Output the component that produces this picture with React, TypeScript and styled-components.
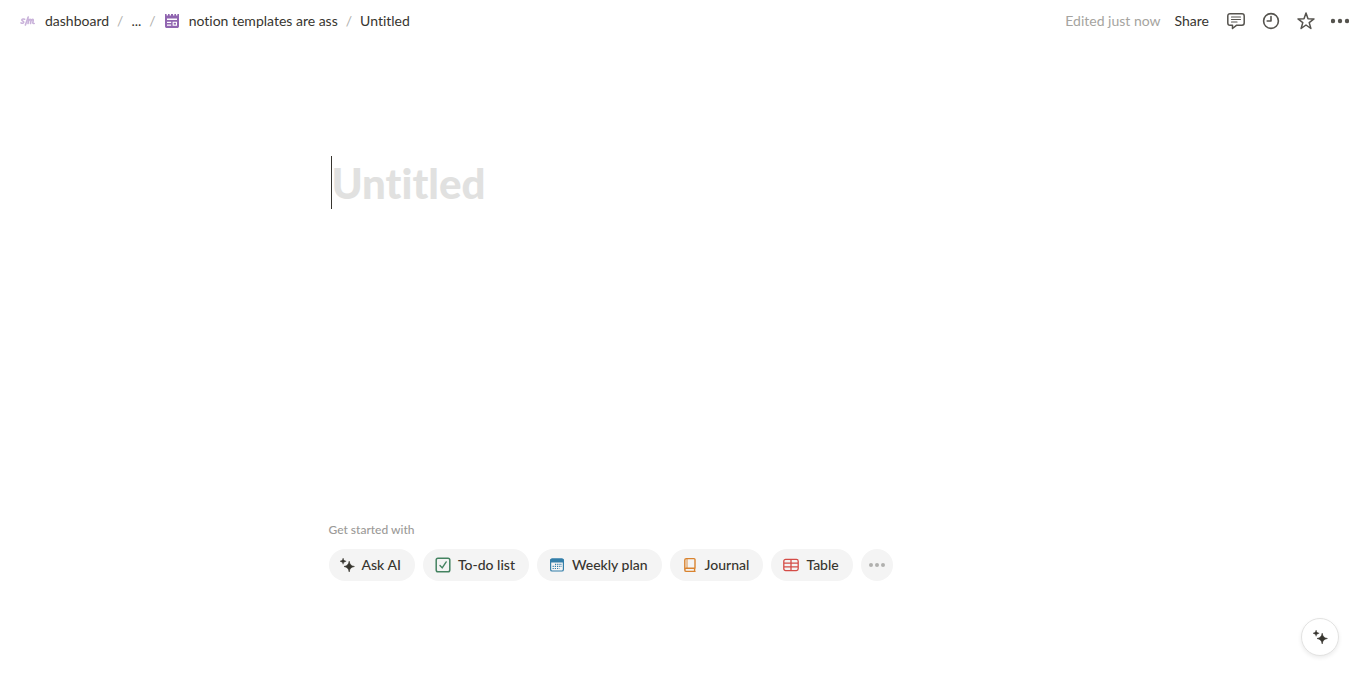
import React from 'react';
import styled, { createGlobalStyle } from 'styled-components';

const GlobalStyle = createGlobalStyle`
  * { box-sizing: border-box; }
  body {
    margin: 0;
    background: #fff;
    color: #37352f;
    font-family: Lato, "Open Sans", sans-serif;
    font-size: 14px;
    font-variant-ligatures: none;
  }
  button, input { font: inherit; font-variant-ligatures: none; color: inherit; }
  button { border: 0; background: none; padding: 0; cursor: pointer; }
  svg { display: block; flex: none; }
`;

const Page = styled.div`
  min-height: 100vh;
  display: flex;
  flex-direction: column;
`;

const TopBar = styled.header`
  display: flex;
  align-items: center;
  justify-content: space-between;
  height: 42px;
  padding: 0 16px 0 20px;
`;

const Breadcrumbs = styled.nav`
  display: flex;
  align-items: center;
  gap: 8px;
  line-height: 20px;
`;

const Crumb = styled.a`
  display: flex;
  align-items: center;
  gap: 9px;
  color: #37352f;
  text-decoration: none;
  white-space: nowrap;
`;

const Slash = styled.span`
  color: #b0afac;
`;

const Actions = styled.div`
  display: flex;
  align-items: center;
  gap: 14px;
  line-height: 20px;
`;

const Edited = styled.span`
  color: #a5a4a0;
`;

const ShareButton = styled.button`
  color: #37352f;
`;

const IconGroup = styled.div`
  display: flex;
  align-items: center;
  gap: 15px;
  padding-left: 3px;
`;

const IconButton = styled.button`
  display: flex;
  color: #55534e;
`;

const Content = styled.main`
  width: 100%;
  max-width: 708px;
  margin: 0 auto;
  padding-top: 114px;
  flex: 1;
`;

const TitleInput = styled.input`
  display: block;
  width: calc(100% - 2px);
  height: 53px;
  margin-left: 2px;
  padding: 0;
  border: 0;
  border-left: 1px solid #37352f;
  outline: 0;
  background: none;
  font-size: 42px;
  font-weight: 900;
  &::placeholder { color: #e1e1e0; opacity: 1; }
`;

const Starter = styled.section`
  margin-top: 313px;
`;

const StarterLabel = styled.h2`
  margin: 0 0 11px;
  color: #9b9a97;
  font-size: 12px;
  line-height: 16px;
  font-weight: 500;
`;

const PillRow = styled.div`
  display: flex;
  flex-wrap: wrap;
  gap: 8px;
`;

const Pill = styled.button<{ $inset?: number }>`
  display: flex;
  align-items: center;
  gap: 7px;
  height: 32px;
  padding: 0 14px 0 ${({ $inset = 12 }) => $inset}px;
  border-radius: 16px;
  background: #f4f4f4;
  font-weight: 500;
  line-height: 16px;
  white-space: nowrap;
`;

const MorePill = styled(Pill)`
  width: 32px;
  padding: 0;
  justify-content: center;
  color: #b0b0ae;
`;

const AiButton = styled.button`
  position: fixed;
  right: 26px;
  bottom: 20px;
  display: flex;
  align-items: center;
  justify-content: center;
  width: 38px;
  height: 38px;
  border: 1px solid #e2e2e1;
  border-radius: 50%;
  background: #fff;
  box-shadow: 0 2px 4px rgba(15, 15, 15, 0.08);
`;

const LogoMark = () => (
  <svg width="16" height="16" viewBox="0 0 16 16" fill="none" stroke="#c9b2da" strokeWidth="1.6" strokeLinecap="round" strokeLinejoin="round">
    <path d="M4.6 6.2C2.8 5.5 1.4 6.4 2 7.4c.5.9 1.9.7 1.7 1.9-.2 1.2-1.7 1.2-2.7.6M8.2 4 5.4 12M8 10.5l1-4.2M8.8 7.8c1-1.8 2.5-1.8 2.2-.2l-.5 2.9M11.2 7.6c1-1.7 2.3-1.6 2 0l-.4 2.1c-.1.6.5.8 1.4.8" />
  </svg>
);

const NewsIcon = () => (
  <svg width="16" height="16" viewBox="0 0 16 16">
    <path fill="#9065b0" fillRule="evenodd" d="M1 1h1.600v1.400h1.400V1h1.600v1.400H7V1h2v1.400h1.400V1H12v1.400h1.400V1H15v12.200c0 1-.8 1.800-1.800 1.800H2.800C1.800 15 1 14.200 1 13.200ZM3 5.600v1.400h10V5.600ZM3 8.700v1.200h4.200V8.700ZM3 11.500v1.200h4.200v-1.200ZM8.600 8.700v4H13v-4Z" />
    <path fill="#9065b0" d="M9.700 9.800h2.200v1.800H9.700z" />
  </svg>
);

const CommentIcon = () => (
  <svg width="20" height="20" viewBox="0 0 20 20" fill="none" stroke="currentColor" strokeWidth="1.5" strokeLinejoin="round" strokeLinecap="round">
    <path d="M4 2.700h12A2.200 2.200 0 0 1 18.200 4.900v7.200a2.200 2.200 0 0 1-2.200 2.200h-5.600L6.500 17.500v-3.200H4a2.200 2.200 0 0 1-2.200-2.200V4.900A2.200 2.200 0 0 1 4 2.700Z" />
    <path strokeWidth="1.200" d="M5.500 6h9M5.500 8.500h9M5.500 11h5.500" />
  </svg>
);

const ClockIcon = () => (
  <svg width="20" height="20" viewBox="0 0 20 20" fill="none" stroke="currentColor" strokeWidth="1.600" strokeLinecap="round" strokeLinejoin="round">
    <circle cx="10" cy="10" r="7.400" />
    <path d="M10 5.500V10H6.200" />
  </svg>
);

const StarIcon = () => (
  <svg width="20" height="20" viewBox="0 0 20 20" fill="none" stroke="currentColor" strokeWidth="1.500" strokeLinejoin="round">
    <path d="M10 2l2 5.700 6 .2-4.800 3.700 1.700 5.900-4.900-3.500-4.900 3.500 1.700-5.900L2 7.900l6-.2Z" />
  </svg>
);

const DotsIcon = ({ size, r, gap }: { size: number; r: number; gap: number }) => (
  <svg width={size} height="20" viewBox={`0 0 ${size} 20`} fill="currentColor">
    <circle cx={size / 2 - gap} cy="10" r={r} />
    <circle cx={size / 2} cy="10" r={r} />
    <circle cx={size / 2 + gap} cy="10" r={r} />
  </svg>
);

const SparkleIcon = () => (
  <svg width="16" height="16" viewBox="0 0 16 16" fill="#37352f" stroke="#37352f" strokeLinejoin="round">
    <path d="M10.200 4.200C10.700 7.400 12 8.900 15.400 9.500 12 10.100 10.700 11.600 10.200 14.900 9.600 11.600 8.300 10.100 5 9.500 8.300 8.900 9.600 7.400 10.200 4.200Z" strokeWidth=".6" />
    <path d="M4.100 1.100C4.400 3.100 5.200 3.900 7.200 4.200 5.200 4.600 4.400 5.400 4.100 7.300 3.700 5.400 2.900 4.600 1 4.200 2.900 3.900 3.700 3.100 4.100 1.100Z" strokeWidth=".4" />
  </svg>
);

const CheckIcon = () => (
  <svg width="16" height="16" viewBox="0 0 16 16" fill="none" stroke="#448361" strokeLinecap="round" strokeLinejoin="round">
    <rect x="1.200" y="1.200" width="13.600" height="13.600" rx="1.800" strokeWidth="1.500" />
    <path strokeWidth="1.400" d="M5 8.500l2.200 2.400 4-6" />
  </svg>
);

const CalendarIcon = () => (
  <svg width="16" height="16" viewBox="0 0 16 16">
    <rect x="1.600" y="2.200" width="12.800" height="11.800" rx="1.600" fill="none" stroke="#337ea9" strokeWidth="1.200" />
    <path fill="#337ea9" d="M1 5.500V3.500a2 2 0 0 1 2-2h10a2 2 0 0 1 2 2v2Z" />
    <path stroke="#337ea9" strokeWidth="1.200" strokeDasharray="1.200 1" d="M6 7.300h7M3.600 9.400h9.200M3.600 11.500h7" />
  </svg>
);

const JournalIcon = () => (
  <svg width="16" height="16" viewBox="0 0 16 16" fill="none" stroke="#d9832f" strokeWidth="1.400" strokeLinejoin="round" strokeLinecap="round">
    <path d="M13 11.200V2.600c0-.6-.4-1-1-1H4.300c-.9 0-1.500.6-1.500 1.500v9.800c0 .9.600 1.500 1.500 1.500H13M13 11.200H4.300c-.9 0-1.500.7-1.500 1.500M12.600 11.300v3" />
    <path strokeWidth=".9" d="M5 1.800v9.300" />
  </svg>
);

const TableIcon = () => (
  <svg width="16" height="16" viewBox="0 0 16 16" fill="none" stroke="#d44c47" strokeWidth="1.300">
    <rect x=".8" y="2.400" width="14.400" height="11.200" rx="1.800" />
    <path d="M1 6.200h14M1 9.900h14M8 2.500v11" />
  </svg>
);

const starters = [
  { label: 'Ask AI', Icon: SparkleIcon, inset: 10 },
  { label: 'To-do list', Icon: CheckIcon },
  { label: 'Weekly plan', Icon: CalendarIcon },
  { label: 'Journal', Icon: JournalIcon },
  { label: 'Table', Icon: TableIcon },
];

export default function App() {
  return (
    <Page>
      <GlobalStyle />
      <TopBar>
        <Breadcrumbs aria-label="Breadcrumb">
          <Crumb href="#"><LogoMark />dashboard</Crumb>
          <Slash>/</Slash>
          <Crumb href="#">...</Crumb>
          <Slash>/</Slash>
          <Crumb href="#"><NewsIcon />notion templates are ass</Crumb>
          <Slash>/</Slash>
          <Crumb href="#">Untitled</Crumb>
        </Breadcrumbs>
        <Actions>
          <Edited>Edited just now</Edited>
          <ShareButton>Share</ShareButton>
          <IconGroup>
            <IconButton aria-label="Comments"><CommentIcon /></IconButton>
            <IconButton aria-label="Updates"><ClockIcon /></IconButton>
            <IconButton aria-label="Favorite"><StarIcon /></IconButton>
            <IconButton aria-label="More options"><DotsIcon size={18} r={2.2} gap={7} /></IconButton>
          </IconGroup>
        </Actions>
      </TopBar>
      <Content>
        <TitleInput aria-label="Page title" placeholder="Untitled" />
        <Starter>
          <StarterLabel>Get started with</StarterLabel>
          <PillRow>
            {starters.map(({ label, Icon, inset }) => (
              <Pill key={label} $inset={inset}><Icon />{label}</Pill>
            ))}
            <MorePill aria-label="More templates"><DotsIcon size={18} r={2} gap={6} /></MorePill>
          </PillRow>
        </Starter>
      </Content>
      <AiButton aria-label="Open AI assistant"><SparkleIcon /></AiButton>
    </Page>
  );
}
